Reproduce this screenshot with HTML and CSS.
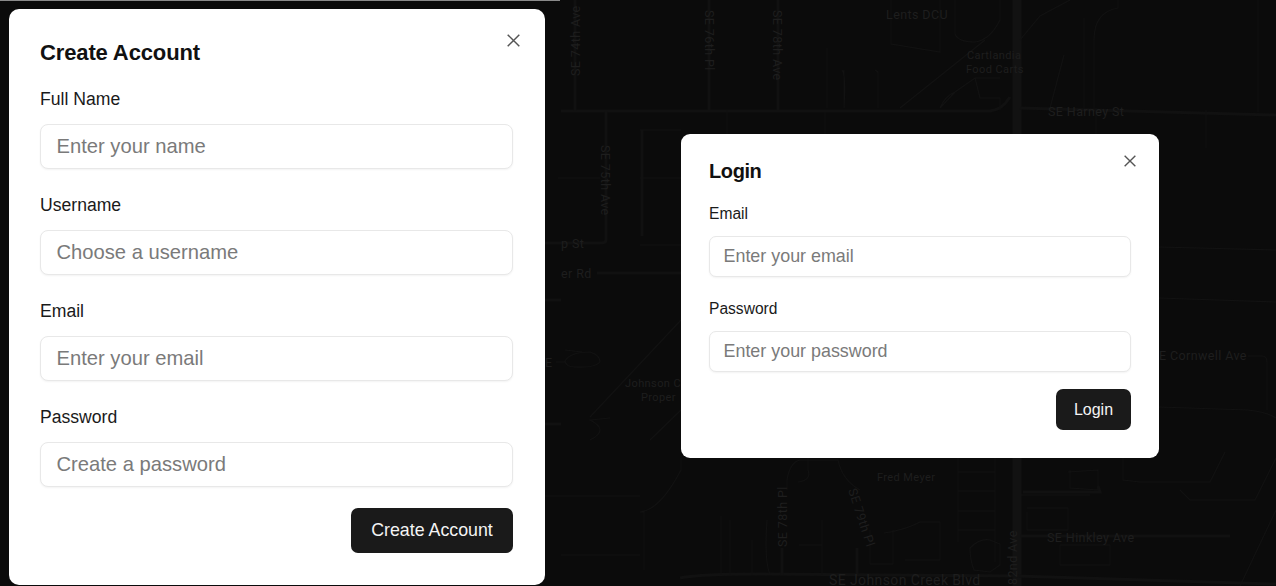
FILE: index.html
```html
<!DOCTYPE html>
<html lang="en">
<head>
<meta charset="utf-8">
<title>Create Account and Login</title>
<link rel="stylesheet" href="styles.css">
</head>
<body>
<div class="page">
  <svg class="map" viewBox="0 0 1276 586" width="1276" height="586" aria-hidden="true">
    <g class="road-lg">
      <path d="M1017 0V586"/>
    </g>
    <g class="road-md">
      <path d="M561 111H990Q1002 110 1010 97"/>
      <path d="M1020 108L1276 115"/>
      <path d="M575 0V111M606 111V240Q606 243 600 243H545"/>
      <path d="M709 0V110M778 0V110"/>
      <path d="M642 130V236"/>
      <path d="M597 273H681M545 300H561M545 424H561"/>
      <path d="M680 578Q700 574 760 574L1017 576L1276 584"/>
      <path d="M1023 492H1100L1098 486"/>
      <path d="M1020 536H1230"/>
      <path d="M782 548V575M857 548V575"/>
    </g>
    <g class="road-sm">
      <path d="M640 178H681M558 178H600M545 496H640M561 555H640"/>
      <path d="M1159 247L1276 250M1159 298L1276 302M1159 407L1248 410Q1267 412 1276 418"/>
      <path d="M1248 356H1262Q1267 356 1267 362V410"/>
      <path d="M1206 110V148M1258 0V112"/>
      <path d="M727 110V134M825 112V134M1096 108V134"/>
      <path d="M640 130H681M640 245H681"/>
      <path d="M1084 18V108M1094 110V40Q1094 12 1118 8V0"/>
      <path d="M891 0V44L940 52V0M955 0V34Q958 42 975 42Q990 40 1000 20V0"/>
      <path d="M1020 40L1040 16L1070 0"/>
      <path d="M827 48V108M844 70V108M842 70Q846 74 844 108M875 70L878 72V108M873 70"/>
      <path d="M940 108Q945 96 955 92L975 78H1000M975 78L980 98H1000V110M955 92L940 108M900 108L985 40"/>
      <path d="M1064 55L1050 108"/>
      <path d="M565 361Q570 352 590 352Q600 355 600 362Q595 368 575 367Q566 367 565 361ZM556 362H565M565 350L582 352"/>
      <path d="M590 417L681 320M650 440L681 410M610 418L590 420Q610 430 590 440"/>
      <path d="M681 458V470Q660 510 640 512H644V570M644 512"/>
      <path d="M721 516V575M730 520V575M767 520Q764 560 770 575M752 575V540M775 590M808 458V470Q812 480 798 482"/>
      <path d="M787 490V480Q790 462 800 460H838Q842 480 860 490"/>
      <path d="M822 520V575M799 545H822V575"/>
      <path d="M870 530V564H893V530M884 533Q905 530 920 522H940V560H905"/>
      <path d="M958 458V542M995 458V562M958 472H995M958 491H995M958 511H995M958 530H995"/>
      <path d="M970 548Q980 538 990 540L1000 544V565L990 572L974 570Q970 560 970 548Z"/>
      <path d="M1017 495H1090M1027 508H1068L1068 530H1027V512"/>
      <path d="M1068 472L1098 470L1098 490L1070 488V470"/>
      <path d="M1060 545H1110V565H1060ZM1123 458V480L1140 482H1210L1225 452M1180 490L1190 500H1255L1276 458"/>
      <path d="M1240 586L1276 510"/>
    </g>
    <g class="map-label">
      <text x="1048" y="116">SE Harney St</text>
      <text x="886" y="19">Lents DCU</text>
      <text x="967" y="59" class="map-label-sm">Cartlandia</text>
      <text x="966" y="73" class="map-label-sm">Food Carts</text>
      <text x="561" y="278">er Rd</text>
      <text x="561" y="248">p St</text>
      <text x="545" y="367">E</text>
      <text x="625" y="387" class="map-label-sm">Johnson C</text>
      <text x="641" y="401" class="map-label-sm">Proper</text>
      <text x="1159" y="360">E Cornwell Ave</text>
      <text x="877" y="481" class="map-label-sm">Fred Meyer</text>
      <text x="1047" y="542">SE Hinkley Ave</text>
      <text x="829" y="585" class="map-label-lg">SE Johnson Creek Blvd</text>
      <text transform="translate(580 76) rotate(-90)">SE 74th Ave</text>
      <text transform="translate(601 145) rotate(90)">SE 75th Ave</text>
      <text transform="translate(705 10) rotate(90)">SE 76th Pl</text>
      <text transform="translate(773 10) rotate(90)">SE 78th Ave</text>
      <text transform="translate(787 547) rotate(-90)">SE 78th Pl</text>
      <text transform="translate(848 490) rotate(72)">SE 79th Pl</text>
      <text transform="translate(1017 585) rotate(-90)">82nd Ave</text>
    </g>
  </svg>

  <section class="pane pane-left">
    <form class="modal modal-lg">
      <button class="close" type="button" aria-label="Close">
        <svg viewBox="0 0 13 13"><path d="M.7.7 12.3 12.3M12.3.7.7 12.3"/></svg>
      </button>
      <h2 class="title">Create Account</h2>
      <div class="field"><label class="label">Full Name</label><input class="input" placeholder="Enter your name"></div>
      <div class="field"><label class="label">Username</label><input class="input" placeholder="Choose a username"></div>
      <div class="field"><label class="label">Email</label><input class="input" placeholder="Enter your email"></div>
      <div class="field"><label class="label">Password</label><input class="input" placeholder="Create a password"></div>
      <div class="actions"><button class="submit" type="button">Create Account</button></div>
    </form>
  </section>

  <section class="pane pane-right">
    <form class="modal modal-sm">
      <button class="close" type="button" aria-label="Close">
        <svg viewBox="0 0 13 13"><path d="M.7.7 12.3 12.3M12.3.7.7 12.3"/></svg>
      </button>
      <h2 class="title">Login</h2>
      <div class="field"><label class="label">Email</label><input class="input" placeholder="Enter your email"></div>
      <div class="field"><label class="label">Password</label><input class="input" placeholder="Enter your password"></div>
      <div class="actions"><button class="submit" type="button">Login</button></div>
    </form>
  </section>
</div>
</body>
</html>
```
FILE: styles.css
```css
* { box-sizing: border-box; }
html, body { margin: 0; height: 100%; overflow: hidden; background: #0b0b0b; }
body { font-family: "Liberation Sans", Arial, sans-serif; color: #111; }

.page { position: relative; display: flex; width: 1276px; height: 586px; overflow: hidden; }

/* The street map is a free canvas behind both dialogs */
.map { position: absolute; left: 0; top: 0; }
.map path { fill: none; }
.road-lg path { stroke: #121212; stroke-width: 9; }
.road-md path { stroke: #111; stroke-width: 3; }
.road-sm path { stroke: #121212; stroke-width: 1.1; }
.map-label text { font-family: Roboto, "Liberation Sans", sans-serif; font-size: 12.5px; letter-spacing: .4px; fill: #1e1e1e; }
.map-label .map-label-sm { font-size: 11px; }
.map-label .map-label-lg { font-size: 14px; }

.pane { position: relative; }
.pane-left { width: 560px; padding: 8px 0 0 9px; border-top: 1px solid #8a8a8a; }
.pane-right { flex: 1; padding: 134px 0 0 121px; }

.modal { position: relative; background: #fff; }
.modal-lg { width: 536px; height: 576px; padding: 31px 32px 32px 31px; border-radius: 10px; --title: 22px; --title-ls: -.13px; --title-lh: 25px; --title-gap: 24px; --label: 17.6px; --label-lh: 20px; --label-gap: 15px; --field-gap: 26px; --input-h: 45px; --input: 20.2px; --input-pad: 15.5px; --radius: 8px; --submit-w: 162px; --submit-h: 45px; --submit-size: 17.8px; --actions-gap: 21px; }
.modal-sm { width: 478px; height: 324px; padding: 26px 28px 28px; border-radius: 9px; --title: 20px; --title-ls: -.4px; --title-lh: 23px; --title-gap: 22px; --label: 15.6px; --label-lh: 18px; --label-gap: 13px; --field-gap: 23px; --input-h: 41px; --input: 17.9px; --input-pad: 13.5px; --radius: 7px; --submit-w: 75px; --submit-h: 41px; --submit-size: 16px; --actions-gap: 17px; }

.title { margin: 0 0 var(--title-gap); font-size: var(--title); line-height: var(--title-lh); font-weight: 700; letter-spacing: var(--title-ls); color: #111; }

.field { display: flex; flex-direction: column; gap: var(--label-gap); }
.field + .field { margin-top: var(--field-gap); }
.label { font-size: var(--label); line-height: var(--label-lh); color: #1a1a1a; }
.input { display: block; width: 100%; height: var(--input-h); padding: 0 var(--input-pad); border: 1px solid #e8e8e8; border-radius: var(--radius); background: #fff; box-shadow: 0 1px 2px rgba(0,0,0,.05); font-family: inherit; font-size: var(--input); outline: 0; }
.input::placeholder { color: #7a7a7a; opacity: 1; }

.actions { display: flex; justify-content: flex-end; margin-top: var(--actions-gap); }
.submit { width: var(--submit-w); height: var(--submit-h); padding: 0; border: 0; border-radius: 7px; background: #1a1a1a; color: #f4f4f4; font-family: inherit; font-size: var(--submit-size); }

.close { position: absolute; padding: 0; border: 0; background: none; line-height: 0; }
.close svg { display: block; width: 100%; height: 100%; }
.close path { fill: none; stroke: #555; stroke-width: 1.5; }
.modal-lg .close { top: 25px; right: 25px; width: 13px; height: 13px; }
.modal-sm .close { top: 21px; right: 23px; width: 12px; height: 12px; }
```
